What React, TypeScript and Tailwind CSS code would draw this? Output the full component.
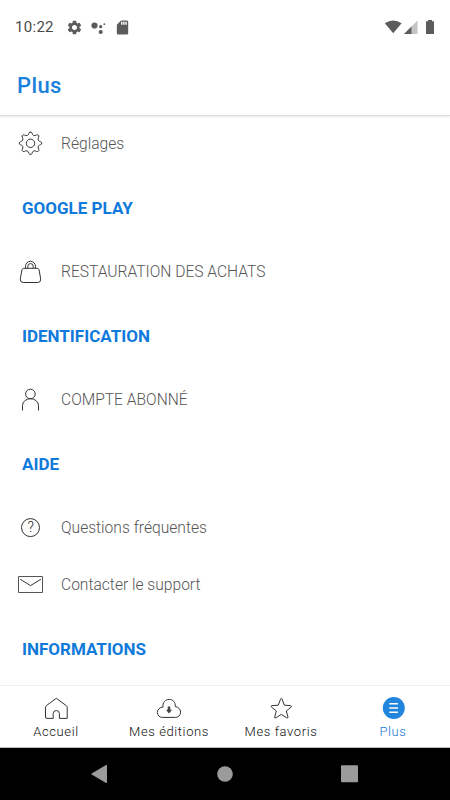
import type { ReactNode } from "react";
import { MdSdCard, MdSettings } from "react-icons/md";

// Eight-toothed gear outline, centred on (cx, cy)
function gearPath(cx: number, cy: number) {
    const profile = [[-22.5, 8.3], [-13, 9.1], [-8.5, 10.2], [-4, 11.2], [4, 11.2], [8.5, 10.2], [13, 9.1]];
    const points: string[] = [];
    for (let tooth = 0; tooth < 8; tooth++) {
        for (const [offset, radius] of profile) {
            const angle = ((tooth * 45 + offset) * Math.PI) / 180;
            points.push(`${(cx + radius * Math.cos(angle)).toFixed(2)} ${(cy + radius * Math.sin(angle)).toFixed(2)}`);
        }
    }
    return `M${points.join("L")}Z`;
}

function LineIcon({ children }: { children: ReactNode }) {
    return (
        <svg width="30" height="30" viewBox="0 0 30 30" fill="none" stroke="#333333" strokeWidth="1" strokeLinejoin="round" className="block shrink-0">
            {children}
        </svg>
    );
}

const GearIcon = () => (
    <LineIcon>
        <path d={gearPath(14.5, 14.2)} />
        <circle cx="14.5" cy="14.3" r="4.2" />
    </LineIcon>
);

const BagIcon = () => (
    <LineIcon>
        <path d="M7.7 11.3H21.3Q22.6 11.3 23 12.6L24.7 21.8Q25 25.5 21.8 25.5H7.2Q4 25.5 4.3 21.8L6 12.6Q6.4 11.3 7.7 11.3Z" />
        <path d="M9.5 11V9.3a5 5 0 0 1 10 0V11M11.8 11V9.3a2.7 2.7 0 0 1 5.4 0V11" />
    </LineIcon>
);

const UserIcon = () => (
    <LineIcon>
        <circle cx="14.4" cy="9" r="4.8" />
        <path d="M6.5 25.5V20.5a8 6.8 0 0 1 16 0V25.5" />
    </LineIcon>
);

const HelpIcon = () => (
    <LineIcon>
        <circle cx="14.5" cy="14.6" r="9" />
        <text x="14.6" y="19.2" textAnchor="middle" fill="#222222" stroke="none" className="font-['Roboto',sans-serif] text-[14px]">?</text>
    </LineIcon>
);

const MailIcon = () => (
    <LineIcon>
        <rect x="2.5" y="6.5" width="24" height="16" stroke="#555555" />
        <path d="M4.3 9.3L14.5 15.6L24.8 9.3" />
    </LineIcon>
);

const HomeIcon = () => (
    <LineIcon>
        <path d="M15.3 5.3L25.5 12.8Q26.2 13.3 26.2 14.3V25.4H18.4V20.6a3.1 3.1 0 0 0-6.2 0V25.4H6Q4.5 25.4 4.5 24V14.3Q4.5 13.3 5.2 12.8Z" />
    </LineIcon>
);

const CloudIcon = () => (
    <LineIcon>
        <path d="M8.3 24.4C5.4 24.4 3.4 22.2 3.4 19.4C3.4 16.6 5.8 14.1 9 14C8.4 9.5 11.4 6.4 15.1 6.4C19 6.4 21.7 9.4 21.2 13.5C24.4 13.8 26.6 16.4 26.6 19.2C26.6 22.2 24.4 24.4 21.5 24.4Z" />
        <path d="M13.7 13.5H16.3V16.7H18L15 20.4L12 16.7H13.7Z" fill="#444444" stroke="none" />
    </LineIcon>
);

const StarIcon = () => (
    <LineIcon>
        <path d="M15.3 5.4Q15.8 5.4 16.1 6.2L18.3 12.2L24.6 12.6Q26 13 25.2 14L20.3 18L22 24Q22 25.4 20.7 24.8L15.3 21.4L9.9 24.8Q8.5 25.4 8.7 24L10.3 18L5.4 14Q4.6 13 6 12.6L12.3 12.2L14.5 6.2Q14.8 5.4 15.3 5.4Z" />
    </LineIcon>
);

const MenuIcon = () => (
    <LineIcon>
        <circle cx="15.8" cy="15" r="11" fill="#2185dc" stroke="none" />
        <path d="M11.3 10.7H20M11.3 15H20M11.3 19.2H20" stroke="#ffffff" strokeWidth="1.4" />
    </LineIcon>
);

function StatusBar() {
    return (
        <div className="flex h-[55px] items-center pr-4 pl-[15px] text-[#5c5c5c]">
            <span className="w-[51px] text-[15px] tracking-[0.3px] text-[#4a4a4a]">10:22</span>
            <MdSettings size={17} />
            <svg width="16" height="14" viewBox="0 0 16 14" fill="currentColor" className="ml-2">
                <circle cx="3.5" cy="4.5" r="3.1" />
                <circle cx="9.7" cy="5.7" r="1.6" />
                <circle cx="9.7" cy="11" r="2.1" />
                <circle cx="13.3" cy="3.2" r="0.9" />
            </svg>
            <MdSdCard size={17} className="ml-[7px]" />
            <svg width="50" height="16" viewBox="0 0 50 16" fill="currentColor" className="mb-px ml-auto">
                <path d="M.8 4.2Q9.2-1.4 17.6 4.2L9.2 14.2Z" />
                <path d="M33.5 1.5V15H20Z" fill="#c4c4c4" />
                <path d="M27.5 7.5V15H20Z" />
                <path d="M42 2.3H44V1H48V2.3H50V15H42Z" />
            </svg>
        </div>
    );
}

function SectionTitle({ children }: { children: ReactNode }) {
    return <h2 className="flex h-[72px] items-center pt-0.5 pl-[22px] text-[17px] font-bold text-[#0f7adb]">{children}</h2>;
}

function Row({ icon, children }: { icon: ReactNode; children: ReactNode }) {
    return (
        <div className="flex h-14 items-center gap-[15px] pl-4 text-[15.6px] font-light text-[#555555]">
            {icon}
            <span className="pt-0.5">{children}</span>
        </div>
    );
}

function NavItem({ icon, label, active }: { icon: ReactNode; label: string; active?: boolean }) {
    return (
        <div className={`flex flex-col items-center pt-[7px] text-[13px] leading-[18px] font-light tracking-[0.6px] ${active ? "text-[#1976d2]" : "text-[#111111]"}`}>
            {icon}
            <span className="whitespace-nowrap">{label}</span>
        </div>
    );
}

export default function App() {
    return (
        <div className="flex h-[800px] w-[450px] flex-col overflow-hidden bg-white font-['Roboto',sans-serif]">
            {/* Header */}
            <StatusBar />
            <header className="z-10 flex h-[61px] shrink-0 items-center border-b border-[#dcdcdc] pl-[17px] shadow-[0_1px_2px_rgba(0,0,0,0.1)]">
                <h1 className="text-[22px] font-medium tracking-[0.4px] text-[#1a80dc]">Plus</h1>
            </header>

            {/* Settings list */}
            <main className="min-h-0 flex-1 overflow-hidden">
                <Row icon={<GearIcon />}>Réglages</Row>
                <SectionTitle>GOOGLE PLAY</SectionTitle>
                <Row icon={<BagIcon />}>RESTAURATION DES ACHATS</Row>
                <SectionTitle>IDENTIFICATION</SectionTitle>
                <Row icon={<UserIcon />}>COMPTE ABONNÉ</Row>
                <SectionTitle>AIDE</SectionTitle>
                <div className="flex flex-col gap-px">
                    <Row icon={<HelpIcon />}>Questions fréquentes</Row>
                    <Row icon={<MailIcon />}>Contacter le support</Row>
                </div>
                <SectionTitle>INFORMATIONS</SectionTitle>
            </main>

            {/* Bottom tabs */}
            <nav className="grid h-[63px] shrink-0 grid-cols-[112px_114px_110px_114px] border-t border-b border-t-[#f1f1f1] border-b-[#b5bab5]">
                <NavItem icon={<HomeIcon />} label="Accueil" />
                <NavItem icon={<CloudIcon />} label="Mes éditions" />
                <NavItem icon={<StarIcon />} label="Mes favoris" />
                <NavItem icon={<MenuIcon />} label="Plus" active />
            </nav>

            {/* Android buttons */}
            <footer className="h-[52px] shrink-0 bg-black">
                <svg width="450" height="52" viewBox="0 0 450 52" fill="#9b9b9b">
                    <path d="M106 17Q107 16.6 107 18V34Q107 35.4 106 35L91.7 26.6Q91 26 91.7 25.4Z" />
                    <circle cx="225" cy="26" r="7.8" />
                    <rect x="341" y="17.3" width="17" height="17" rx="1" />
                </svg>
            </footer>
        </div>
    );
}
